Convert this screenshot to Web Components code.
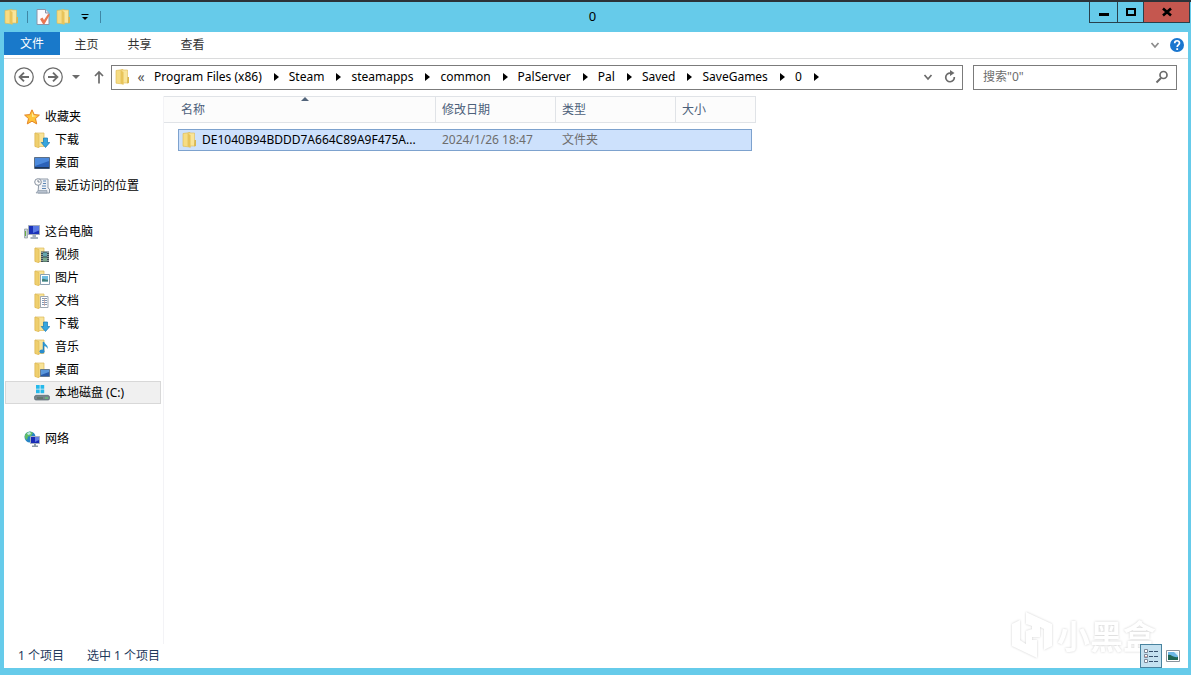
<!DOCTYPE html>
<html lang="zh-CN">
<head>
<meta charset="utf-8">
<title>0</title>
<style>
html, body { margin: 0; height: 100%; }
body { font: 12px/16px "Noto Sans", "Noto Sans CJK SC", sans-serif; color: #000; background: #66cbea; }
</style>
</head>
<body>
<explorer-window></explorer-window>
<script>
const folder = `<path d="M1 1.5 8 .5V15l-7-.8z" fill="#f6dc83" stroke="#dfb84e" stroke-width=".6"/><path d="M6 1h6.500v13H6z" fill="#f9e59a" stroke="#dfba55" stroke-width=".6"/><path d="M6 1.500 8.500 3v13L6 14.300z" fill="#e8c45a"/><path d="M12.500 8h1.500v6l-2 .6z" fill="#d9b751"/>`;
const sub = `<path d="M1 1h9v13.500H1z" fill="#f8e398" stroke="#dcb95a" stroke-width=".7"/><path d="M1 1 5 2.500V16l-4-1.500z" fill="#efcf6e" stroke="#d8b24e" stroke-width=".5"/>`;
const ICONS = {
  folder,
  check: `<path d="M2 .5h8.500L14 4v11.500H2z" fill="#fbfbff" stroke="#8b94a8"/><path d="M10.500.5V4H14" fill="#dfe3ee" stroke="#8b94a8"/><path d="m5 10 2.500-1.500L9 11l4-6 2 .5-5.500 9.500H8z" fill="#e97752"/>`,
  star: `<path d="m8 .8 2.200 4.800 5.200.5-3.900 3.500 1.200 5.300L8 12.200l-4.700 2.700 1.200-5.300L.6 6.100l5.200-.5z" fill="#fec43a" stroke="#e58425"/><path d="m8 3 1.400 3.500 3.400.4L8 8z" fill="#ffec9c"/>`,
  download: sub + `<path d="M9.500 6h4v4.500h2.300L11.500 15.500 7.200 10.500h2.300z" fill="#36a6df" stroke="#1878b1" stroke-width=".7"/>`,
  desktop: `<path d="M.5 2.500h15v11H.5z" fill="#2b62b8" stroke="#5c6f86"/><path d="M1 3h14v3L1 11z" fill="#4c8add"/><path d="M1 12h14v1.500H1z" fill="#1d3658"/>`,
  recent: `<path d="M5 1h9v9l1.500 1v4H4z" fill="#eef1f5" stroke="#8f9aa8"/><path d="M4 12.500h9V15H2z" fill="#b7c1ce" stroke="#8793a2" stroke-width=".6"/><path d="M9 3h3m-3 2.500h3M8 8h4m-4 2.500h4" stroke="#5d87b5"/><circle cx="4" cy="4" r="3.300" fill="#fbfbfb" stroke="#8792a0"/><path d="M4 2v2h1.800" stroke="#59677a" stroke-width=".8" fill="none"/>`,
  pc: `<path d="M.5 5h3v9h-3z" fill="#c7d0d4" stroke="#8c989c" stroke-width=".7"/><path d="M1.500 7v5" stroke="#69ae46"/><path d="M4.500 1.500h11v9h-11z" fill="#1b32b8" stroke="#a2abbb"/><path d="M9 2h6v4.500L9 9z" fill="#5878e4"/><path d="M8.500 11h3.500v2h2v2H6.500v-2h2z" fill="#a6b2bd"/>`,
  video: sub + `<path d="M7 4.500h8v10.500H7z" fill="#394b52"/><path d="M9 5.500h4v4H9z" fill="#65a5ad"/><path d="M9 10.500h4v4H9z" fill="#7baa8c"/><path d="M8 5v10M14 5v10" stroke="#dce3e5" stroke-dasharray="1 1"/>`,
  image: sub + `<path d="M6.500 4.500h9v10h-9z" fill="#fff" stroke="#8ba0b3"/><path d="M8 6h6v5.500H8z" fill="#70bce0"/><path d="M8 9.500c2-2 3 1 6 0v2H8z" fill="#448078"/>`,
  doc: sub + `<path d="M6.500 3.500h7.500v11H6.500z" fill="#fff" stroke="#9da7b2"/><path d="M8 5.500h5M8 7.500h5M8 9.500h5M8 11.500h5" stroke="#839bb5"/><path d="M10.500 5v8" stroke="#cd9e95" stroke-width=".7"/>`,
  music: sub + `<path d="M9.500 3v9" stroke="#2583c2" stroke-width="1.500"/><path d="M9.500 2c.5 3 5.500 4 4 8-.4-2-2-3-4-3z" fill="#319bd4"/><ellipse cx="8" cy="12.500" rx="2.600" ry="2" fill="#2a8ccc"/>`,
  deskfolder: sub + `<path d="M6.500 7.500h9v7h-9z" fill="#295ba9" stroke="#647a91"/><path d="M7 8h8v2l-8 3z" fill="#5a98dc"/>`,
  disk: `<path d="M2 0h3.700v3.700H2zM6.500 0h3.700v3.700H6.500zM2 4.500h3.700v3.700H2zM6.500 4.500h3.700v3.700H6.500z" fill="#25b9eb"/><path d="m2 9-1.500 2.500h15L14 9z" fill="#d7dde1"/><rect x=".5" y="10.500" width="15" height="4.500" rx="1.500" fill="#77858d" stroke="#596870" stroke-width=".7"/><path d="M3 13h6" stroke="#536850"/><path d="M11 13h3" stroke="#63d96a"/>`,
  network: `<circle cx="6" cy="6" r="5.500" fill="#2684c5"/><path d="M1 4c2-4 6-4 8-2L7 5 4 5.500 3 9C1 8 .5 6 1 4z" fill="#61bd65"/><path d="M3 2 6 1l1 2-3 1z" fill="#bee9ed"/><path d="M6.500 5.500h9v7h-9z" fill="#1729b5" stroke="#a3afc0"/><path d="M11 6h4v3l-4 2z" fill="#617be3"/><path d="M10 13h2v1.500h2V16H8v-1.500h2z" fill="#8c9ba6"/>`,
  back: `<circle cx="8" cy="8" r="7.400"/><path d="M12 8H4.500M8 4.500 4.500 8 8 11.500" stroke-width="1.500"/>`,
  forward: `<circle cx="8" cy="8" r="7.400"/><path d="M4 8h7.500M8 4.500 11.500 8 8 11.500" stroke-width="1.500"/>`,
  up: `<path d="M8 14.500V3M4 7l4-4 4 4" stroke-width="1.700"/>`,
  chevron: `<path d="m4.500 6 3.500 4 3.500-4" stroke-width="1.700"/>`,
  refresh: `<path d="M8.500 4.200A4.300 4.300 0 1 0 12.300 8" stroke-width="1.700"/><path d="M8 1v6l4.500-3z" fill="currentColor" stroke="none"/>`,
  search: `<circle cx="9.500" cy="6" r="3.500" stroke-width="1.700"/><path d="m7 9-4.500 4.500" stroke-width="2"/>`,
  help: `<circle cx="8" cy="8" r="7" fill="#1976cf" stroke="none"/><path d="M5.700 6.200C5.700 3 10.500 3 10.500 6c0 1.800-2.300 1.900-2.300 4" stroke="#fff" stroke-width="1.700"/><path d="M7.300 11.200h1.800v1.800H7.300z" fill="#fff" stroke="none"/>`,
  caret: `<path d="M4 6h8l-4 4z" fill="currentColor" stroke="none"/>`,
  arrow: `<path d="M6 4v8l5-4z" fill="currentColor" stroke="none"/>`,
  custom: `<path d="M4.500 5.500h7" stroke-width="1"/><path d="M5 8h6l-3 3z" fill="currentColor" stroke="none"/>`,
  min: `<path d="M3 9h10v3H3z" fill="currentColor" stroke="none"/>`,
  max: `<path d="M4 5h8v6H4z" stroke-width="2"/>`,
  close: `<path d="m4 4.500 8 7m0-7-8 7" stroke-width="2.600"/>`,
  details: `<path d="M1.500 1.500h3v3h-3zM1.500 6.500h3v3h-3zM1.500 11.500h3v3h-3z" fill="#fff" stroke="#7d8899"/><path d="M6 3.500h4m1 0h4M6 8.500h4m1 0h4M6 13.500h4m1 0h4" stroke="#35506c"/><path d="M2.500 8.500h1" stroke="#c7655c"/>`,
  thumb: `<path d="M1.500 2.500h13v11h-13z" fill="#fff" stroke="#8b949d"/><path d="M3 4h10v8H3z" fill="#6db8e6"/><path d="M3 7c3-1 5 3 10 2v3H3z" fill="#1e6654"/><path d="M9 4h4v4z" fill="#d9f0fa"/>`
};
const define = (name, html, setup) => {
  const template = document.createElement('template');
  template.innerHTML = html;
  customElements.define(name, class extends HTMLElement {
    constructor() {
      super();
      this.attachShadow({ mode: 'open' }).append(template.content.cloneNode(true));
    }
    connectedCallback() { if (setup) setup(this, this.shadowRoot); }
  });
};
const reset = `:host,*{box-sizing:border-box} button{font:inherit;color:inherit;background:none;border:0;padding:0;margin:0;display:flex;align-items:center;justify-content:center}`;

define('app-icon', `<style>:host{display:block;flex:none;width:16px;height:16px}svg{display:block;width:100%;height:100%}.line{fill:none;stroke:currentColor}</style>`, (el, root) => {
  const name = el.getAttribute('name');
  const line = 'back forward up chevron refresh search help caret arrow custom min max close'.split(' ').includes(name);
  root.innerHTML += `<svg viewBox="0 0 16 16" class="${line ? 'line' : ''}" aria-hidden="true">${ICONS[name]}</svg>`;
});

define('title-bar', `<style>${reset}
:host{display:grid;grid-template-columns:1fr auto 1fr;height:32px;border-top:2px solid #2c3238}
.quick{display:flex;align-items:center;gap:5px;padding-left:4px}
.rule{width:1px;height:12px;background:#3f87a5;margin:0 2px}
h1{font-size:13px;font-weight:400;line-height:28px;margin:0 6px 0 0}
.controls{display:flex;justify-content:flex-end;align-items:flex-start;padding-right:1px}
.controls button{height:21px;width:27px;border:1px solid #28404c;border-top:0;margin-left:-1px}
.controls button:first-child{width:29px}
.controls .close{width:47px;background:#c5574f}
</style>
<div class="quick"><app-icon name="folder"></app-icon><span class="rule"></span>
<button aria-label="属性"><app-icon name="check"></app-icon></button><button aria-label="新建文件夹"><app-icon name="folder"></app-icon></button><button aria-label="自定义快速访问工具栏"><app-icon name="custom"></app-icon></button><span class="rule"></span></div>
<h1><slot></slot></h1>
<div class="controls"><button aria-label="最小化"><app-icon name="min"></app-icon></button><button aria-label="最大化"><app-icon name="max"></app-icon></button><button class="close" aria-label="关闭"><app-icon name="close"></app-icon></button></div>`);

define('ribbon-tabs', `<style>${reset}
:host{display:flex;height:27px;background:#fff;border-bottom:1px solid #dadbdc;color:#333}
button{width:53px;height:26px}
.file{width:56px;height:23px;background:#1979ca;color:#fff}
.end{margin-left:auto;display:flex;align-items:center;gap:6px;padding-right:3px;color:#8b8b8b}
.end button{width:16px}
</style>
<button class="file">文件</button><button>主页</button><button>共享</button><button>查看</button>
<div class="end"><button aria-label="展开功能区"><app-icon name="chevron"></app-icon></button><button aria-label="帮助"><app-icon name="help"></app-icon></button></div>`);

define('address-bar', `<style>${reset}
:host{display:flex;align-items:center;height:37px;padding:0 11px 1px 10px;color:#6b6b6b}
.nav{display:flex;align-items:center}
.nav app-icon{width:20px;height:20px}
.nav button+button{margin-left:9px}
.nav .recent{margin-left:5px}.nav .up{margin-left:7px}
.nav .recent app-icon,.nav .up app-icon{width:16px;height:16px}
.field{display:flex;align-items:center;border:1px solid #7b7b7b;height:25px;background:#fff}
.path{flex:1;margin-left:4px;padding:0 4px 0 3px;min-width:0}
ol{display:flex;align-items:center;list-style:none;margin:0;padding:0;color:#000}
li{display:flex;align-items:center}
li a{color:inherit;text-decoration:none;line-height:20px;white-space:nowrap}
li app-icon{margin:0 5px 0 6px}
.more{width:14px;margin:0 6px 0 3px;font-size:14px;line-height:20px;color:#555}
.tools{display:flex;gap:6px;margin-left:auto}
.search{width:204px;margin-left:10px;padding:0 6px 0 9px}
input{flex:1;min-width:0;border:0;outline:0;padding:0;font:inherit;background:none}
input::placeholder{color:#6d6d6d;opacity:1}
</style>
<nav class="nav"><button aria-label="后退"><app-icon name="back"></app-icon></button><button aria-label="前进"><app-icon name="forward"></app-icon></button><button class="recent" aria-label="最近位置"><app-icon name="caret"></app-icon></button><button class="up" aria-label="向上"><app-icon name="up"></app-icon></button></nav>
<div class="field path"><app-icon name="folder"></app-icon><button class="more">«</button><ol></ol><div class="tools"><button aria-label="历史记录"><app-icon name="chevron"></app-icon></button><button aria-label="刷新"><app-icon name="refresh"></app-icon></button></div></div>
<div class="field search"><input type="text" aria-label="搜索" placeholder='搜索"0"'><button aria-label="开始搜索"><app-icon name="search"></app-icon></button></div>`, (el, root) => {
  root.querySelector('ol').innerHTML = el.getAttribute('path').split('/').map(p => `<li><a href="#">${p}</a><app-icon name="arrow"></app-icon></li>`).join('');
});

define('nav-item', `<style>
:host{display:block}
a{box-sizing:border-box;display:flex;align-items:center;gap:5px;height:23px;padding-left:18px;border:1px solid transparent;color:#000;text-decoration:none;white-space:nowrap}
:host([child]) a{padding-left:28px}
:host([selected]) a{background:#f0f0f0;border-color:#d8d8d8}
</style><a href="#"><app-icon></app-icon><span><slot></slot></span></a>`, (el, root) => {
  const old = root.querySelector('app-icon');
  const icon = document.createElement('app-icon');
  icon.setAttribute('name', el.getAttribute('icon'));
  old.replaceWith(icon);
});

define('nav-pane', `<style>
:host{display:flex;flex-direction:column;gap:23px;box-sizing:border-box;width:160px;padding:9px 2px 0 1px;border-right:1px solid #f3f3f6}
</style>
<section><nav-item icon="star">收藏夹</nav-item><nav-item child icon="download">下载</nav-item><nav-item child icon="desktop">桌面</nav-item><nav-item child icon="recent">最近访问的位置</nav-item></section>
<section><nav-item icon="pc">这台电脑</nav-item><nav-item child icon="video">视频</nav-item><nav-item child icon="image">图片</nav-item><nav-item child icon="doc">文档</nav-item><nav-item child icon="download">下载</nav-item><nav-item child icon="music">音乐</nav-item><nav-item child icon="deskfolder">桌面</nav-item><nav-item child selected icon="disk">本地磁盘 (C:)</nav-item></section>
<section><nav-item icon="network">网络</nav-item></section>`);

define('file-list', `<style>*{box-sizing:border-box}
:host{display:block;flex:1;min-width:0}
table{border-collapse:separate;border-spacing:0;table-layout:fixed;width:592px}
.c1{width:272px}.c2,.c3{width:120px}.c4{width:80px}
th{position:relative;height:27px;padding:0 0 0 6px;text-align:left;font-weight:400;color:#4c607a;background:#fcfcfc;border:solid #e0e3e7;border-width:1px 1px 1px 0}
th:first-child{padding-left:17px}
.sort{position:absolute;left:137px;top:0;width:8px;height:4px;background:#52647a;clip-path:polygon(50% 0,100% 100%,0 100%)}
td{padding:6px 0 0;color:#6d6d6d}
td:first-child{padding-left:14px;color:#000}
td:last-child{padding-right:4px}
.cell{display:flex;align-items:center;gap:4px;height:22px;padding-left:6px;background:#cde1fc;border:solid #7da2ce;border-width:1px 0;white-space:nowrap}
td:first-child .cell{border-left-width:1px;padding-left:3px}
td:last-child .cell{border-right-width:1px}
.name{width:220px;overflow:hidden}
</style>
<table><colgroup><col class="c1"><col class="c2"><col class="c3"><col class="c4"></colgroup>
<thead><tr><th>名称<span class="sort"></span></th><th>修改日期</th><th>类型</th><th>大小</th></tr></thead>
<tbody><tr><td><div class="cell"><app-icon name="folder"></app-icon><span class="name">DE1040B94BDDD7A664C89A9F475A...</span></div></td><td><div class="cell">2024/1/26 18:47</div></td><td><div class="cell">文件夹</div></td><td><div class="cell"></div></td></tr></tbody></table>`);

define('status-bar', `<style>${reset}
:host{display:flex;align-items:center;gap:23px;height:24px;padding:0 4px 0 14px;color:#1e395b}
.views{position:relative;z-index:1;display:flex;margin-left:auto}
.views button{width:22px;height:24px;border:1px solid transparent}
.views .on{background:#c4e1f0;border-color:#48839f}
</style><span>1 个项目</span><span>选中 1 个项目</span><div class="views"><button class="on" aria-label="详细信息"><app-icon name="details"></app-icon></button><button aria-label="大图标"><app-icon name="thumb"></app-icon></button></div>`);

define('water-mark', `<style>
:host{position:absolute;right:32px;bottom:9px;display:flex;align-items:center;gap:4px;pointer-events:none;filter:drop-shadow(0 0 1px #d0d0d0)}
svg{width:42px;height:48px}
span{font:700 33px/44px "Noto Sans CJK SC",sans-serif;color:#fff}
</style><svg viewBox="0 0 42 48" fill="#fff" aria-hidden="true"><path d="M1 13 9 9v20l6 4V20l6-2v11h5v18L1 35zM15 1l26 12v22l-8 4V18l-4-2v10h-8V15l-6-2z"/></svg><span>小黑盒</span>`);

define('explorer-window', `<style>
:host{display:flex;flex-direction:column;box-sizing:border-box;min-height:100vh;padding-bottom:7px;background:#66cbea}
main{position:relative;display:flex;flex-direction:column;flex:1;margin:0 3px 0 4px;background:#fff}
.body{display:flex;flex:1}
</style><title-bar>0</title-bar><main><ribbon-tabs></ribbon-tabs><address-bar path="Program Files (x86)/Steam/steamapps/common/PalServer/Pal/Saved/SaveGames/0"></address-bar><div class="body"><nav-pane></nav-pane><file-list></file-list></div><water-mark></water-mark><status-bar></status-bar></main>`);
</script>
</body>
</html>
